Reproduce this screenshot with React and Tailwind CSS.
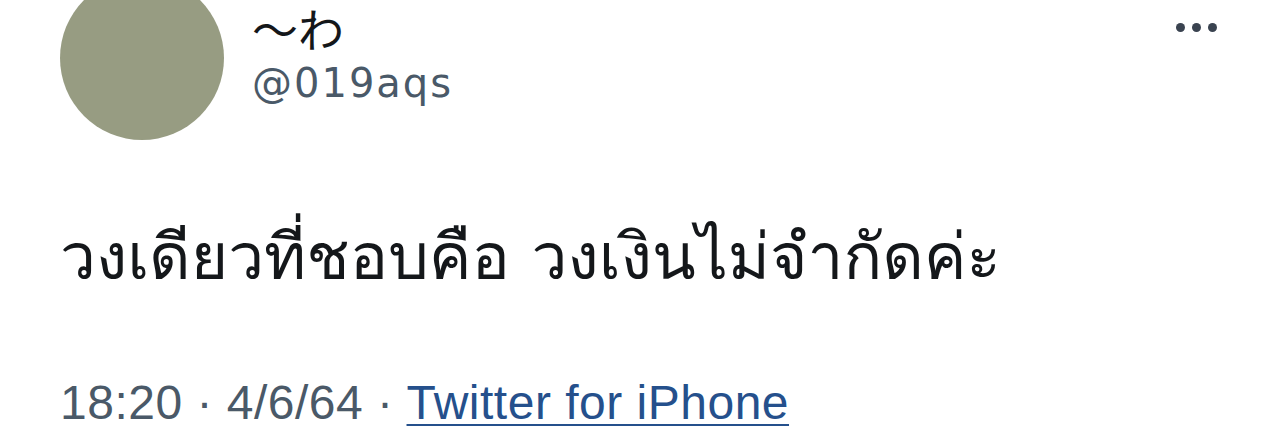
export default function App() {
  return (
    <div className="w-[1284px] h-[428px] overflow-hidden bg-white font-['DejaVu_Sans','Liberation_Sans',sans-serif]">
      <div className="flex items-start pl-[60px] pr-[67px]">
        <div className="w-[164px] h-[164px] rounded-full bg-[#979c82] mt-[-24px] shrink-0" />
        <div className="ml-[28px] flex flex-col pt-[2px]">
          <div className="text-[46px] leading-[50px] text-[#14171a] font-['Noto_Sans_CJK_JP',sans-serif]">〜わ</div>
          <div className="text-[40px] leading-[48px] tracking-[2px] text-[#4a5968] mt-[7px]">@019aqs</div>
        </div>
        <div className="ml-auto flex gap-[7px] mt-[23px]">
          <span className="w-[9px] h-[9px] rounded-full bg-[#3a4350]" />
          <span className="w-[9px] h-[9px] rounded-full bg-[#3a4350]" />
          <span className="w-[9px] h-[9px] rounded-full bg-[#3a4350]" />
        </div>
      </div>
      <div className="pl-[60px] mt-[76px] text-[64px] leading-[80px] text-[#14171a] font-['Loma','Noto_Sans_Thai_Looped',sans-serif]">
        วงเดียวที่ชอบคือ วงเงินไม่จำกัดค่ะ
      </div>
      <div className="pl-[60px] mt-[83px] text-[48px] leading-[48px] tracking-[0.5px] text-[#4a5968] font-['Liberation_Sans',sans-serif]">
        18:20 · 4/6/64 · <span className="text-[#25508c] underline decoration-[2px] underline-offset-[5px]">Twitter for iPhone</span>
      </div>
    </div>
  );
}
